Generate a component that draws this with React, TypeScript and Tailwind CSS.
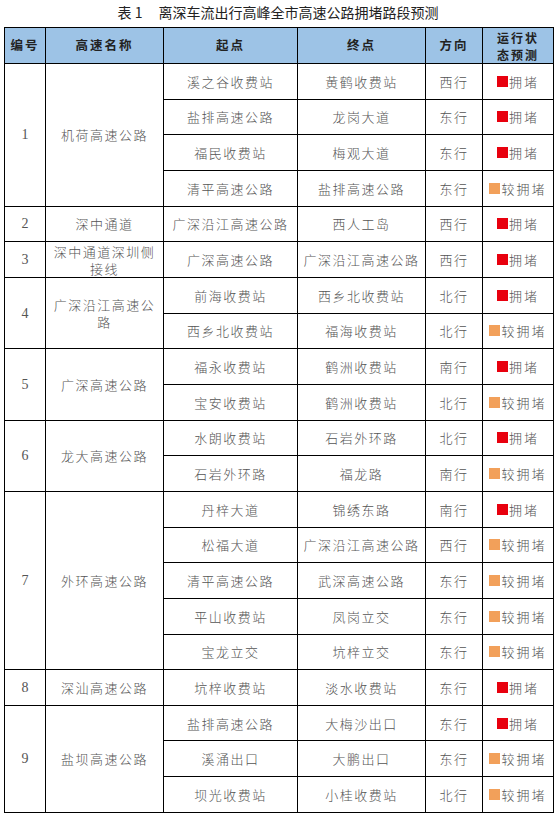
import React from "react";

type Seg = { from: string; to: string; dir: string; heavy: boolean };
type Group = { no: string; name: React.ReactNode; segs: Seg[] };

const S = (from: string, to: string, dir: string, heavy: boolean): Seg => ({ from, to, dir, heavy });

const groups: Group[] = [
  {
    no: "1",
    name: "机荷高速公路",
    segs: [
      S("溪之谷收费站", "黄鹤收费站", "西行", true),
      S("盐排高速公路", "龙岗大道", "东行", true),
      S("福民收费站", "梅观大道", "东行", true),
      S("清平高速公路", "盐排高速公路", "东行", false),
    ],
  },
  { no: "2", name: "深中通道", segs: [S("广深沿江高速公路", "西人工岛", "西行", true)] },
  { no: "3", name: "深中通道深圳侧接线", segs: [S("广深高速公路", "广深沿江高速公路", "西行", true)] },
  {
    no: "4",
    name: "广深沿江高速公路",
    segs: [S("前海收费站", "西乡北收费站", "北行", true), S("西乡北收费站", "福海收费站", "北行", false)],
  },
  {
    no: "5",
    name: "广深高速公路",
    segs: [S("福永收费站", "鹤洲收费站", "南行", true), S("宝安收费站", "鹤洲收费站", "北行", false)],
  },
  {
    no: "6",
    name: "龙大高速公路",
    segs: [S("水朗收费站", "石岩外环路", "北行", true), S("石岩外环路", "福龙路", "南行", false)],
  },
  {
    no: "7",
    name: "外环高速公路",
    segs: [
      S("丹梓大道", "锦绣东路", "南行", true),
      S("松福大道", "广深沿江高速公路", "西行", false),
      S("清平高速公路", "武深高速公路", "东行", false),
      S("平山收费站", "凤岗立交", "东行", false),
      S("宝龙立交", "坑梓立交", "东行", false),
    ],
  },
  { no: "8", name: "深汕高速公路", segs: [S("坑梓收费站", "淡水收费站", "东行", true)] },
  {
    no: "9",
    name: "盐坝高速公路",
    segs: [
      S("盐排高速公路", "大梅沙出口", "东行", true),
      S("溪涌出口", "大鹏出口", "东行", false),
      S("坝光收费站", "小桂收费站", "北行", false),
    ],
  },
];

const cell = "border border-black text-center align-middle p-0";
const bodyText = "text-[13px] font-light text-[#555] tracking-[1.5px] leading-[17px]";

function Status({ heavy }: { heavy: boolean }) {
  return (
    <div className="flex items-center justify-center">
      <span className={`inline-block w-[11px] h-[11px] ${heavy ? "bg-[#e8000e]" : "bg-[#f2a05a]"}`} />
      <span className="ml-[1px] text-[13px] font-light text-[#555] tracking-[2px] leading-[17px]">
        {heavy ? "拥堵" : "较拥堵"}
      </span>
    </div>
  );
}

export default function App() {
  return (
    <div
      className="w-[556px] h-[816px] bg-white overflow-hidden"
      style={{ fontFamily: '"Noto Sans CJK SC", "Liberation Sans", sans-serif' }}
    >
      <div className="h-[27px] flex items-start justify-center pt-[2px] text-[14px] leading-[20px] text-[#222]">
        <span className="mr-[16px]">表 1</span>
        <span>离深车流出行高峰全市高速公路拥堵路段预测</span>
      </div>
      <table className="ml-[4px] border-collapse table-fixed border-[1.5px] border-black w-[549px]">
        <colgroup>
          <col className="w-[41px]" />
          <col className="w-[118px]" />
          <col className="w-[134px]" />
          <col className="w-[128px]" />
          <col className="w-[57px]" />
          <col className="w-[71px]" />
        </colgroup>
        <thead>
          <tr className="h-[36px] bg-[#9dc3e6] text-[12.5px] font-bold text-[#222] tracking-[2px]">
            <th className={cell}>编号</th>
            <th className={cell}>高速名称</th>
            <th className={cell}>起点</th>
            <th className={cell}>终点</th>
            <th className={cell}>方向</th>
            <th className={`${cell} text-[12px] leading-[17px] font-bold`}>
              运行状
              <br />
              态预测
            </th>
          </tr>
        </thead>
        <tbody>
          {groups.map((g) =>
            g.segs.map((s, i) => (
              <tr key={g.no + "-" + i} className="h-[35.67px]">
                {i === 0 && (
                  <>
                    <td
                      rowSpan={g.segs.length}
                      className={`${cell} text-[14px] text-[#555]`}
                      style={{ fontFamily: '"Liberation Serif", serif' }}
                    >
                      {g.no}
                    </td>
                    <td rowSpan={g.segs.length} className={`${cell} ${bodyText} px-[6px]`}>
                      {g.name}
                    </td>
                  </>
                )}
                <td className={`${cell} ${bodyText}`}>{s.from}</td>
                <td className={`${cell} ${bodyText}`}>{s.to}</td>
                <td className={`${cell} ${bodyText}`}>{s.dir}</td>
                <td className={cell}>
                  <Status heavy={s.heavy} />
                </td>
              </tr>
            ))
          )}
        </tbody>
      </table>
    </div>
  );
}
